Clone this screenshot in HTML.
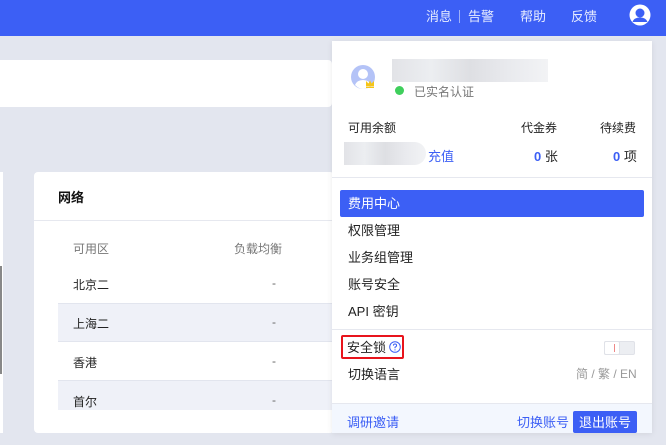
<!DOCTYPE html>
<html><head><meta charset="utf-8"><style>
*{margin:0;padding:0;box-sizing:border-box}
body{width:666px;height:445px;overflow:hidden;background:#e3e6ef;font-family:"Liberation Sans","Noto Sans CJK SC",sans-serif;font-size:12px;color:#222;position:relative}
.abs{position:absolute}
.hdr{left:0;top:0;width:666px;height:36px;background:#3c5ff5}
.hdr span{position:absolute;top:6px;color:#e8edff;font-size:13px}
.t{position:absolute;white-space:nowrap}
.row{position:absolute;left:58px;width:280px;height:39px}
.blur{background:linear-gradient(90deg,#e2e3e7,#eceef1,#dedfe3,#e9eaee,#f2f3f5);}
</style></head><body>
<div class="abs hdr">
<span style="left:426px">消息</span>
<div class="abs" style="left:459px;top:10px;width:1px;height:13px;background:#9fb1f8"></div>
<span style="left:468px">告警</span>
<span style="left:520px">帮助</span>
<span style="left:571px">反馈</span>
<svg class="abs" style="left:629px;top:4px" width="22" height="22" viewBox="0 0 22 22"><circle cx="11" cy="11" r="10.5" fill="#fff"/><circle cx="11" cy="9" r="4.5" fill="#3c5ff5"/><path d="M3.5 18 Q5 13.5 11 13.5 Q17 13.5 18.5 18 Z" fill="#3c5ff5"/></svg>
</div>
<div class="abs" style="left:0;top:60px;width:332px;height:47px;background:#fff;border-radius:0 4px 4px 0"></div>
<div class="abs" style="left:0;top:172px;width:3px;height:261px;background:#fff"></div>
<div class="abs" style="left:0;top:266px;width:2px;height:108px;background:#888"></div>
<div class="abs" style="left:34px;top:172px;width:300px;height:261px;background:#fff;border-radius:4px"></div>
<div class="t" style="left:58px;top:187px;font-size:13px;font-weight:bold;color:#111">网络</div>
<div class="abs" style="left:34px;top:220px;width:300px;height:1px;background:#e6e8ef"></div>
<div class="t" style="left:73px;top:240px;color:#777">可用区</div>
<div class="t" style="left:234px;top:240px;color:#777">负载均衡</div>
<div class="row" style="top:265px"></div>
<div class="row" style="top:303px;background:#eff1f8;border-top:1px solid #e2e5ee;border-bottom:1px solid #e2e5ee"></div>
<div class="row" style="top:380px;height:30px;background:#eff1f8;border-top:1px solid #e2e5ee"></div>
<div class="t" style="left:73px;top:276px">北京二</div><div class="t" style="left:272px;top:276px;color:#666">-</div>
<div class="t" style="left:73px;top:315px">上海二</div><div class="t" style="left:272px;top:315px;color:#666">-</div>
<div class="t" style="left:73px;top:354px">香港</div><div class="t" style="left:272px;top:354px;color:#666">-</div>
<div class="t" style="left:73px;top:393px">首尔</div><div class="t" style="left:272px;top:393px;color:#666">-</div>

<div class="abs" style="left:332px;top:41px;width:320px;height:392px;background:#fff;box-shadow:0 1px 6px rgba(0,0,0,.08)"></div>
<svg class="abs" style="left:350px;top:64px" width="28" height="28" viewBox="0 0 28 28"><circle cx="13" cy="13" r="12" fill="#b4c3f7"/><circle cx="13" cy="10" r="5" fill="#fff"/><path d="M5 21 Q7 16 13 16 Q19 16 21 21 Q17 25 13 25 Q9 25 5 21Z" fill="#fff"/><path d="M16 22 L16 17 L18.5 19.5 L20 16.5 L21.5 19.5 L24 17 L24 22Z" fill="#f5c518"/><rect x="16" y="22.5" width="8" height="1.5" fill="#f5c518"/></svg>
<div class="abs blur" style="left:392px;top:59px;width:156px;height:23px"></div>
<div class="abs" style="left:395px;top:86px;width:9px;height:9px;border-radius:50%;background:#3fcf5c"></div>
<div class="t" style="left:414px;top:83px;color:#777">已实名认证</div>
<div class="t" style="left:348px;top:119px">可用余额</div>
<div class="t" style="left:521px;top:119px">代金券</div>
<div class="t" style="left:600px;top:119px">待续费</div>
<div class="abs blur" style="left:344px;top:142px;width:82px;height:23px;border-radius:0 12px 12px 0"></div>
<div class="t" style="left:428px;top:146px;color:#3c5ff5;font-size:13px">充值</div>
<div class="t" style="left:534px;top:146px;font-size:13px"><b style="color:#3c5ff5">0</b> 张</div>
<div class="t" style="left:613px;top:146px;font-size:13px"><b style="color:#3c5ff5">0</b> 项</div>
<div class="abs" style="left:332px;top:177px;width:320px;height:1px;background:#e6e8ef"></div>
<div class="abs" style="left:340px;top:190px;width:304px;height:27px;background:#3c5ff5;border-radius:2px"></div>
<div class="t" style="left:348px;top:193px;color:#fff;font-size:13px">费用中心</div>
<div class="t" style="left:348px;top:220px;font-size:13px">权限管理</div>
<div class="t" style="left:348px;top:247px;font-size:13px">业务组管理</div>
<div class="t" style="left:348px;top:274px;font-size:13px">账号安全</div>
<div class="t" style="left:348px;top:301px;font-size:13px">API 密钥</div>
<div class="abs" style="left:332px;top:329px;width:320px;height:1px;background:#e6e8ef"></div>
<div class="abs" style="left:341px;top:335px;width:63px;height:24px;border:2px solid #e8141c;border-radius:2px"></div>
<div class="t" style="left:347px;top:337px;font-size:13px">安全锁</div>
<svg class="abs" style="left:389px;top:341px" width="12" height="12" viewBox="0 0 12 12"><circle cx="6" cy="6" r="5.3" fill="none" stroke="#3c5ff5" stroke-width="1"/><path d="M4.4 4.6 Q4.4 3 6 3 Q7.6 3 7.6 4.5 Q7.6 5.5 6 6.2 L6 7.3" fill="none" stroke="#3c5ff5" stroke-width="1"/><circle cx="6" cy="8.9" r=".6" fill="#3c5ff5"/></svg>
<div class="abs" style="left:604px;top:341px;width:31px;height:14px;background:#eceef2;border-radius:2px;border:1px solid #e0e2e8"></div>
<div class="abs" style="left:604px;top:341px;width:16px;height:14px;background:#fff;border:1px solid #e0e2e8;border-radius:2px"></div>
<div class="abs" style="left:614px;top:344px;width:1px;height:8px;background:#e88"></div>
<div class="t" style="left:348px;top:364px;font-size:13px">切换语言</div>
<div class="t" style="left:576px;top:365px;color:#999">简 / 繁 / EN</div>
<div class="abs" style="left:332px;top:403px;width:320px;height:30px;background:#f3f7fe;border-top:1px solid #e6e8ef"></div>
<div class="t" style="left:347px;top:412px;color:#3c5ff5;font-size:13px">调研邀请</div>
<div class="t" style="left:517px;top:412px;color:#3c5ff5;font-size:13px">切换账号</div>
<div class="abs" style="left:573px;top:411px;width:64px;height:22px;background:#3c5ff5;border-radius:2px"></div>
<div class="t" style="left:579px;top:412px;color:#fff;font-size:13px">退出账号</div>
</body></html>
